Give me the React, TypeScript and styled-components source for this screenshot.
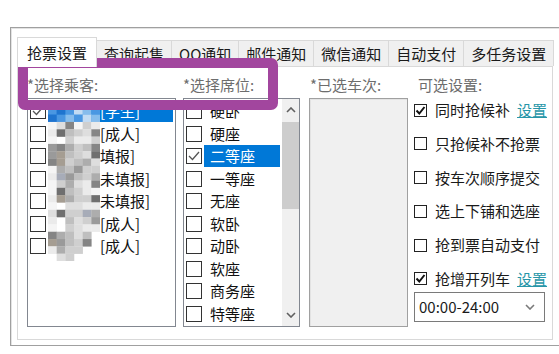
import styled, { createGlobalStyle } from "styled-components";

const GlobalStyle = createGlobalStyle`
  html, body {
    margin: 0;
    padding: 0;
    background: #fff;
    overflow: hidden;
  }
  body {
    font-family: "Noto Sans CJK SC", "Noto Sans", sans-serif;
    font-size: 15px;
    color: #1a1a1a;
  }
  * { box-sizing: border-box; }
`;

const tabs = ["抢票设置", "查询起售", "QQ通知", "邮件通知", "微信通知", "自动支付", "多任务设置"];

const passengers = [
    { text: "[学生]", checked: true, selected: true },
    { text: "[成人]" },
    { text: "填报]" },
    { text: "未填报]" },
    { text: "未填报]" },
    { text: "[成人]" },
    { text: "[成人]" },
];

const seats = [
    { text: "硬卧" },
    { text: "硬座" },
    { text: "二等座", checked: true, selected: true },
    { text: "一等座" },
    { text: "无座" },
    { text: "软卧" },
    { text: "动卧" },
    { text: "软座" },
    { text: "商务座" },
    { text: "特等座" },
];

const options = [
    { text: "同时抢候补", checked: true, link: true },
    { text: "只抢候补不抢票" },
    { text: "按车次顺序提交" },
    { text: "选上下铺和选座" },
    { text: "抢到票自动支付" },
    { text: "抢增开列车", checked: true, link: true },
];

// pixelated name blur, one char per cell
const mosaicRows = [
    "lbBblw",
    "bBbwlb",
    "Bblbwl",
    "972968",
    "815672",
    "9.6886",
    "324652",
    "3r5671",
    "2r6547",
    "945366",
    "8s3564",
    "964782",
    "915689",
    "8r4661",
    "9.7788",
    "7166s4",
    "8.5763",
    "9.6788",
    "24575.",
    "r3562.",
    "8466..",
    ".76...",
];

const mosaicColors: Record<string, string> = {
    B: "#1f74cf", b: "#4a97e2", l: "#86bcec", w: "#c2dbf3",
    "1": "#6f6f6f", "2": "#858585", "3": "#9a9a9a", "4": "#adadad",
    "5": "#bfbfbf", "6": "#cfcfcf", "7": "#dedede", "8": "#ebebeb",
    "9": "#f5f5f5", r: "#a59d92", s: "#a7acb8",
};

function CheckMark({ bold }: { bold?: boolean }) {
    return bold ? (
        <svg width="11" height="11" viewBox="0 0 11 11">
            <polyline points="1.5,5.5 4.3,8.5 9.5,2" fill="none" stroke="#111" strokeWidth="2" />
        </svg>
    ) : (
        <svg width="14" height="14" viewBox="0 0 14 14">
            <polyline points="2,7 5.5,10.5 12,3" fill="none" stroke="#555" strokeWidth="1.3" />
        </svg>
    );
}

function Chevron({ up, color = "#606060" }: { up?: boolean; color?: string }) {
    return (
        <svg width="10" height="6" viewBox="0 0 10 6">
            <polyline
                points={up ? "1,5 5,1 9,5" : "1,1 5,5 9,1"}
                fill="none"
                stroke={color}
                strokeWidth="1.6"
            />
        </svg>
    );
}

function Mosaic() {
    return (
        <MosaicSvg width="52" height="161" viewBox="0 0 6 22" preserveAspectRatio="none">
            {mosaicRows.map((row, y) =>
                row.split("").map((c, x) =>
                    c === "." ? null : (
                        <rect key={x + "-" + y} x={x} y={y} width="1.03" height="1.03" fill={mosaicColors[c]} />
                    )
                )
            )}
        </MosaicSvg>
    );
}

export default function App() {
    return (
        <Page>
            <GlobalStyle />
            <Window>
                <TabStrip>
                    {tabs.map((t, i) => (
                        <Tab key={t} $active={i === 0}>{t}</Tab>
                    ))}
                </TabStrip>
                <Panel>
                    <Column $w={149}>
                        <Label>*选择乘客:</Label>
                        <ListBox>
                            <Items>
                                {passengers.map((p, i) => (
                                    <Row key={"p" + i}>
                                        <Box>{p.checked && <CheckMark />}</Box>
                                        <ItemLabel $selected={p.selected} $pad={2}>
                                            <NameSlot />
                                            {p.text}
                                        </ItemLabel>
                                    </Row>
                                ))}
                            </Items>
                            <Mosaic />
                        </ListBox>
                    </Column>
                    <Column $w={117} $ml={7}>
                        <Label>*选择席位:</Label>
                        <ListBox>
                            <Items>
                                {seats.map((s, i) => (
                                    <Row key={"s" + i}>
                                        <Box>{s.checked && <CheckMark />}</Box>
                                        <ItemLabel $selected={s.selected} $pad={6}>{s.text}</ItemLabel>
                                    </Row>
                                ))}
                            </Items>
                            <ScrollBar>
                                <ArrowButton><Chevron up /></ArrowButton>
                                <Thumb />
                                <Track />
                                <ArrowButton><Chevron /></ArrowButton>
                            </ScrollBar>
                        </ListBox>
                    </Column>
                    <Column $w={99} $ml={9}>
                        <Label $indent={1}>*已选车次:</Label>
                        <TrainBox />
                    </Column>
                    <Column $w={131} $ml={6}>
                        <Label $indent={4}>可选设置:</Label>
                        <OptionList>
                            {options.map((o) => (
                                <OptionRow key={o.text}>
                                    <OptBox>{o.checked && <CheckMark bold />}</OptBox>
                                    <OptText>{o.text}</OptText>
                                    {o.link && <LinkText>设置</LinkText>}
                                </OptionRow>
                            ))}
                        </OptionList>
                        <Select>
                            <span>00:00-24:00</span>
                            <Chevron color="#7a7a7a" />
                        </Select>
                    </Column>
                </Panel>
            </Window>
            <Highlight />
        </Page>
    );
}

const Page = styled.div`
    position: relative;
    width: 559px;
    height: 354px;
    padding: 27px 0 0 10px;
`;

const Window = styled.div`
    width: 560px;
    border: 1px solid #a0a0a0;
    border-right: none;
    box-shadow: inset 1px 1px 0 #e3e3e3;
    padding: 9px 0 5px 6px;
`;

const TabStrip = styled.div`
    display: flex;
    align-items: flex-end;
`;

const Tab = styled.div<{ $active?: boolean }>`
    height: ${(p) => (p.$active ? 30 : 26)}px;
    padding: 0 ${(p) => (p.$active ? 9 : 7)}px;
    margin-left: -1px;
    margin-bottom: ${(p) => (p.$active ? -1 : 0)}px;
    border: 1px solid #d9d9d9;
    border-bottom: none;
    background: ${(p) => (p.$active ? "#fff" : "#f0f0f0")};
    position: relative;
    z-index: ${(p) => (p.$active ? 1 : 0)};
    display: flex;
    align-items: center;
    line-height: 20px;
    white-space: nowrap;
    color: #1a1a1a;
    &:first-child {
        margin-left: 0;
    }
`;

const Panel = styled.div`
    width: 536px;
    border: 1px solid #d9d9d9;
    background: #fff;
    padding: 0 0 12px 9px;
    display: flex;
`;

const Column = styled.div<{ $w: number; $ml?: number }>`
    display: flex;
    flex-direction: column;
    width: ${(p) => p.$w}px;
    margin-left: ${(p) => p.$ml || 0}px;
    flex-shrink: 0;
`;

const Label = styled.div<{ $indent?: number }>`
    margin-top: 8px;
    height: 20px;
    line-height: 20px;
    color: #6d6d6d;
    padding-left: ${(p) => p.$indent || 0}px;
    white-space: nowrap;
`;

const ListBox = styled.div`
    margin-top: 3px;
    height: 229px;
    border: 1px solid #828790;
    background: #fff;
    position: relative;
    display: flex;
    overflow: hidden;
`;

const Items = styled.div`
    flex: 1;
    display: flex;
    flex-direction: column;
    padding-top: 1px;
    min-width: 0;
`;

const Row = styled.div`
    height: 22.5px;
    display: flex;
    align-items: center;
    padding-left: 2px;
    flex-shrink: 0;
`;

const Box = styled.div`
    width: 16px;
    height: 16px;
    border: 1px solid #333;
    background: #fff;
    flex-shrink: 0;
    display: flex;
    align-items: center;
    justify-content: center;
`;

const ItemLabel = styled.div<{ $selected?: boolean; $pad: number }>`
    flex: 1;
    height: 22px;
    margin: 0 2px 0 2px;
    padding-left: ${(p) => p.$pad}px;
    display: flex;
    align-items: center;
    background: ${(p) => (p.$selected ? "#0078d7" : "transparent")};
    color: ${(p) => (p.$selected ? "#fff" : "#111")};
    white-space: nowrap;
    line-height: 20px;
`;

const NameSlot = styled.span`
    display: inline-block;
    width: 50px;
    flex-shrink: 0;
`;

const MosaicSvg = styled.svg`
    position: absolute;
    left: 20px;
    top: 1px;
`;

const ScrollBar = styled.div`
    width: 17px;
    background: #f0f0f0;
    display: flex;
    flex-direction: column;
    flex-shrink: 0;
`;

const ArrowButton = styled.div`
    height: 22px;
    display: flex;
    align-items: center;
    justify-content: center;
`;

const Thumb = styled.div`
    height: 87px;
    margin: 1px 0 0;
    background: #cdcdcd;
`;

const Track = styled.div`
    flex: 1;
`;

const TrainBox = styled.div`
    margin-top: 3px;
    height: 229px;
    background: #f0f0f0;
    border: 1px solid #a0a0a0;
    box-shadow: inset 1px 1px 0 #e3e3e3;
`;

const OptionList = styled.div`
    margin-top: 3px;
    display: flex;
    flex-direction: column;
    gap: 9.8px;
`;

const OptionRow = styled.div`
    height: 24px;
    display: flex;
    align-items: center;
    white-space: nowrap;
`;

const OptBox = styled.div`
    width: 13px;
    height: 13px;
    border: 1px solid #222;
    background: #fff;
    flex-shrink: 0;
    display: flex;
    align-items: center;
    justify-content: center;
`;

const OptText = styled.span`
    margin-left: 8px;
    line-height: 20px;
    color: #1a1a1a;
`;

const LinkText = styled.span`
    margin-left: 7px;
    color: #2796a8;
    text-decoration: underline;
    line-height: 20px;
`;

const Select = styled.div`
    margin-top: 1px;
    height: 30px;
    border: 1px solid #7a7a7a;
    background: #fff;
    display: flex;
    align-items: center;
    justify-content: space-between;
    padding: 0 9px 0 4px;
    color: #1a1a1a;
`;

const Highlight = styled.div`
    position: absolute;
    left: 18px;
    top: 58px;
    width: 260px;
    height: 52px;
    border: 10px solid #a2469e;
    border-radius: 7px;
`;
